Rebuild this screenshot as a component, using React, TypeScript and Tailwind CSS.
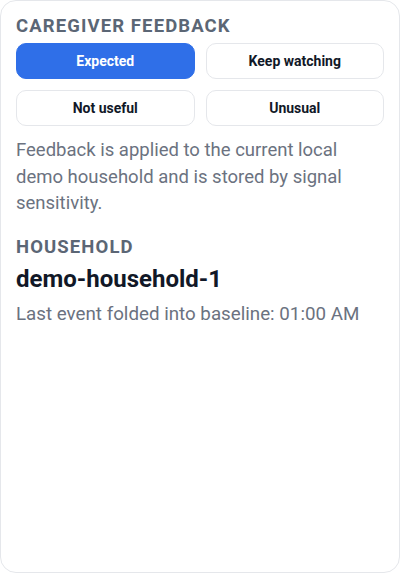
import React from "react";

export default function App() {
  const btn =
    "h-9 rounded-[10px] border text-[14px] font-bold flex items-center justify-center";
  return (
    <div className="w-[401px] h-[573px] bg-white" style={{ fontFamily: "Roboto, 'Noto Sans', sans-serif" }}>
      <div className="w-[400px] h-[573px] rounded-2xl border border-[#e5e7eb] bg-white px-[15px] pt-[12px]">
        <div className="text-[18.5px] font-bold tracking-[0.06em] text-[#5b6675] leading-[26px]">CAREGIVER FEEDBACK</div>
        <div className="mt-[4px] grid grid-cols-2 gap-x-[11px] gap-y-[11px]">
          <button className={`${btn} bg-[#2f6fe8] border-[#2f6fe8] text-white`}>Expected</button>
          <button className={`${btn} bg-white border-[#e5e7eb] text-[#111827]`}>Keep watching</button>
          <button className={`${btn} bg-white border-[#e5e7eb] text-[#111827]`}>Not useful</button>
          <button className={`${btn} bg-white border-[#e5e7eb] text-[#111827]`}>Unusual</button>
        </div>
        <p className="mt-[11px] text-[18.5px] leading-[26.5px] text-[#6b7280]">
          Feedback is applied to the current local demo household and is stored by signal sensitivity.
        </p>
        <div className="mt-[17px] text-[18.5px] font-bold tracking-[0.06em] text-[#5b6675] leading-[26px]">HOUSEHOLD</div>
        <div className="mt-[4px] text-[24px] font-bold text-[#111827] leading-[30px]">demo-household-1</div>
        <div className="mt-[7px] text-[18.75px] leading-[27px] text-[#6b7280]">Last event folded into baseline: 01:00 AM</div>
      </div>
    </div>
  );
}
